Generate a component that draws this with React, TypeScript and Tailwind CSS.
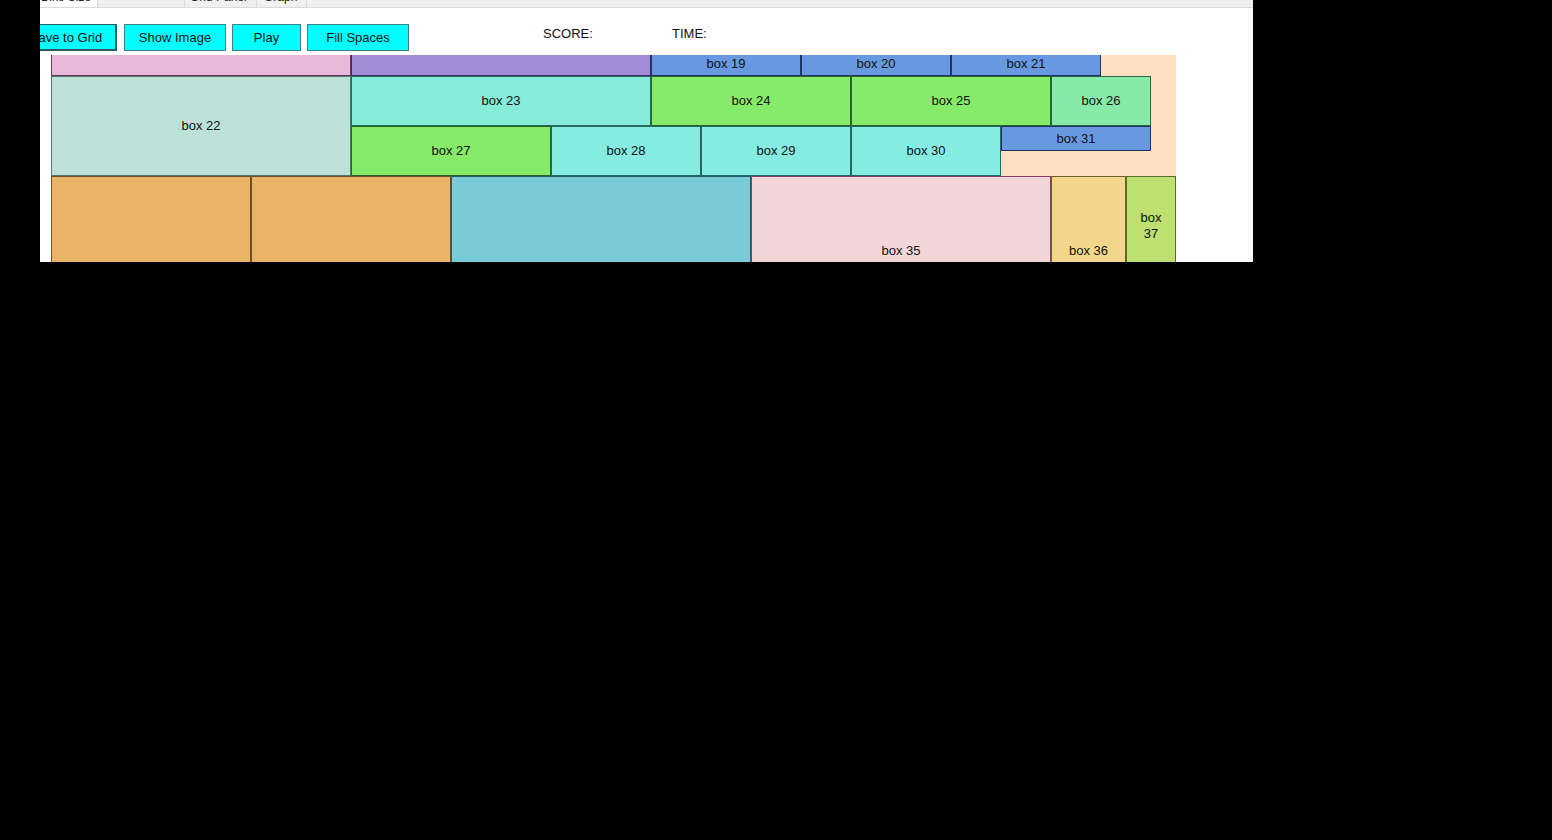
import React from 'react'

interface BoxProps {
  place: string
  color: string
  label?: string
}

const Box: React.FC<BoxProps> = (props) => {
  const { place, color, label } = props

  return (
    <div
      className={`${place} ${color} flex items-center justify-center border px-[6px] text-center text-[13px] leading-4 text-[#111]`}
    >
      {label}
    </div>
  )
}

const boxes: BoxProps[] = [
  { place: 'col-[39/46] row-[1/6]', color: 'bg-[#ffdfc2] border-transparent' },
  { place: 'col-[1/13] row-[1/2]', color: 'bg-[#e8b8d8] border-[#6a3a5e]' },
  { place: 'col-[13/25] row-[1/2]', color: 'bg-[#a38dd8] border-[#3a2c66]' },
  { place: 'col-[25/31] row-[1/2]', color: 'bg-[#6899e0] border-[#1c3564]', label: 'box 19' },
  { place: 'col-[31/37] row-[1/2]', color: 'bg-[#6899e0] border-[#1c3564]', label: 'box 20' },
  { place: 'col-[37/43] row-[1/2]', color: 'bg-[#6899e0] border-[#1c3564]', label: 'box 21' },
  { place: 'col-[1/13] row-[2/6]', color: 'bg-[#bce2d8] border-[#4d7770]', label: 'box 22' },
  { place: 'col-[13/25] row-[2/4]', color: 'bg-[#86ebd9] border-[#246a5e]', label: 'box 23' },
  { place: 'col-[25/33] row-[2/4]', color: 'bg-[#86eb68] border-[#2a6428]', label: 'box 24' },
  { place: 'col-[33/41] row-[2/4]', color: 'bg-[#86eb68] border-[#2a6428]', label: 'box 25' },
  { place: 'col-[41/45] row-[2/4]', color: 'bg-[#86eba8] border-[#2a6444]', label: 'box 26' },
  { place: 'col-[13/21] row-[4/6]', color: 'bg-[#86eb68] border-[#2a6428]', label: 'box 27' },
  { place: 'col-[21/27] row-[4/6]', color: 'bg-[#86ece2] border-[#246a64]', label: 'box 28' },
  { place: 'col-[27/33] row-[4/6]', color: 'bg-[#86ece2] border-[#246a64]', label: 'box 29' },
  { place: 'col-[33/39] row-[4/6]', color: 'bg-[#86ece2] border-[#246a64]', label: 'box 30' },
  { place: 'col-[39/45] row-[4/5]', color: 'bg-[#6899e0] border-[#1c3564]', label: 'box 31' },
  { place: 'col-[1/9] row-[6/14]', color: 'bg-[#e9b466] border-[#6e5024]', label: 'box 32' },
  { place: 'col-[9/17] row-[6/14]', color: 'bg-[#e9b466] border-[#6e5024]', label: 'box 33' },
  { place: 'col-[17/29] row-[6/14]', color: 'bg-[#7acbd7] border-[#265c66]', label: 'box 34' },
  { place: 'col-[29/41] row-[6/12]', color: 'bg-[#f3d6d8] border-[#8a3c62]', label: 'box 35' },
  { place: 'col-[41/44] row-[6/12]', color: 'bg-[#f3d68c] border-[#6e5e28]', label: 'box 36' },
  { place: 'col-[44/46] row-[6/10]', color: 'bg-[#bde071] border-[#56702a]', label: 'box 37' },
]

const Button: React.FC<{ label: string; className: string }> = ({ label, className }) => (
  <button
    className={`${className} h-[27px] shrink-0 bg-[#00ffff] text-[13px] leading-none text-[#111]`}
  >
    {label}
  </button>
)

export default function App() {
  return (
    <div className="h-[840px] w-[1552px] overflow-hidden bg-black font-['Liberation_Sans',Arial,sans-serif]">
      <div className="ml-[40px] flex h-[262px] w-[1213px] flex-col overflow-hidden bg-white">
        {/* tab strip, scrolled off the top */}
        <div className="h-[8px] shrink-0 overflow-hidden border-b border-[#dadada] bg-[#f0f0f0]">
          <div className="-mt-[13px] flex h-[20px] text-[12px] leading-[20px] text-[#222]">
            <div className="flex w-[58px] justify-end overflow-hidden whitespace-nowrap border-r border-[#d9d9d9] bg-white pr-[6px]">
              Change Bins Size
            </div>
            <div className="w-[86px]" />
            <div className="w-[73px] border-x border-[#d9d9d9] px-[5px] whitespace-nowrap">Grid Panel</div>
            <div className="w-[50px] border-r border-[#d9d9d9] px-[7px]">Graph</div>
          </div>
        </div>

        <div className="mt-[16px] flex h-[27px] shrink-0 items-center">
          <Button
            label="Save to Grid"
            className="-ml-[25px] w-[102px] border border-[#2a5c5c] shadow-[inset_-1px_-1px_0_#2a5c5c]"
          />
          <Button label="Show Image" className="ml-[7px] w-[102px] border border-[#3d8585]" />
          <Button label="Play" className="ml-[6px] w-[69px] border border-[#3d8585]" />
          <Button label="Fill Spaces" className="ml-[6px] w-[102px] border border-[#3d8585]" />
          <div className="mb-[7px] ml-[134px] w-[129px] text-[13px] text-[#111]">SCORE:</div>
          <div className="mb-[7px] text-[13px] text-[#111]">TIME:</div>
        </div>

        <div className="ml-[11px] mt-[4px] w-[1125px] flex-1 overflow-hidden">
          <div className="-mt-[4px] grid grid-cols-[repeat(45,25px)] grid-rows-[repeat(14,25px)]">
            {boxes.map((b, i) => (
              <Box key={i} {...b} />
            ))}
          </div>
        </div>
      </div>
    </div>
  )
}
